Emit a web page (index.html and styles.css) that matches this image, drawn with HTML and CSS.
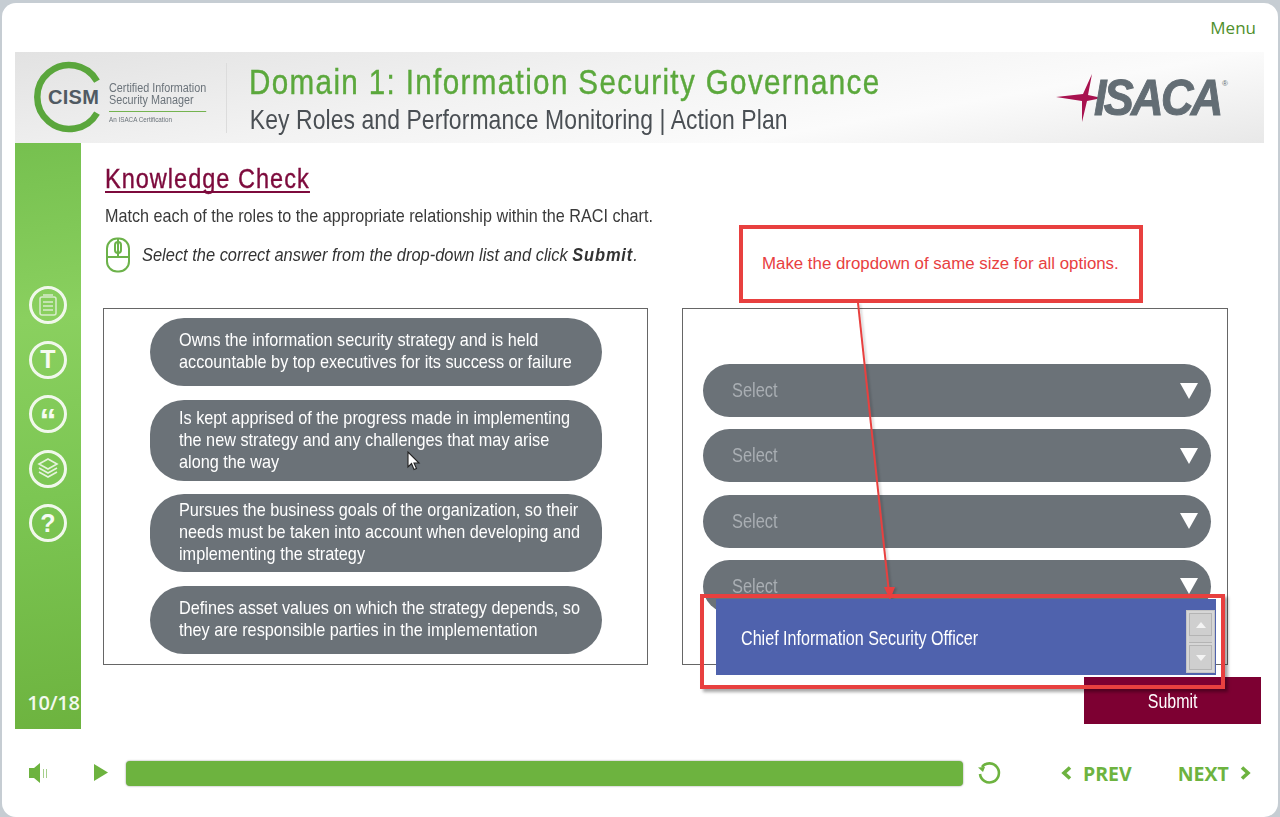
FILE: index.html
```html
<!DOCTYPE html>
<html lang="en">
<head>
    <meta charset="UTF-8">
    <title>Knowledge Check</title>
    <link rel="stylesheet" href="styles.css">
</head>
<body>
    <div class="frame">
        <div class="topbar"><span class="menu">Menu</span></div>

        <header class="banner">
            <div class="cism">
                <svg class="cism-ring" width="72" height="72" viewBox="0 0 72 72">
                    <path d="M64 20A32 32 0 1 0 64 52" fill="none" stroke="#5aa63c" stroke-width="6.5"/>
                </svg>
                <span class="cism-word">CISM</span>
                <div class="cism-text">
                    <span>Certified Information</span>
                    <span>Security Manager</span>
                    <i class="cism-rule"></i>
                    <small>An ISACA Certification</small>
                </div>
            </div>
            <div class="titles">
                <h1>Domain 1: Information Security Governance</h1>
                <h2>Key Roles and Performance Monitoring | Action Plan</h2>
            </div>
            <div class="isaca">
                <svg width="46" height="48" viewBox="0 0 46 48">
                    <path d="M0 23L27 20L36 0L32 21L46 24L31 27L26 48L26 27Z" fill="#a8124f"/>
                </svg>
                <span class="isaca-word">ISACA</span>
                <span class="isaca-reg">®</span>
            </div>
        </header>

        <div class="middle">
            <aside class="sidebar">
                <div class="side-icons">
                    <span class="side-icon">
                        <svg width="20" height="22" viewBox="0 0 20 22" fill="none" stroke="#d8eccb" stroke-width="1.5"><rect x="2" y="3" width="16" height="18" rx="2"/><path d="M5 1h10M5 8h10M5 12h10M5 16h10"/></svg>
                    </span>
                    <span class="side-icon glyph">T</span>
                    <span class="side-icon glyph quote">“</span>
                    <span class="side-icon">
                        <svg width="22" height="24" viewBox="0 0 22 24" fill="none" stroke="#e6f3dd" stroke-width="1.6"><path d="M11 2L20 7L11 12L2 7Z"/><path d="M2 11L11 16L20 11M2 15L11 20L20 15"/></svg>
                    </span>
                    <span class="side-icon glyph">?</span>
                </div>
                <div class="page-count">10/18</div>
            </aside>

            <main class="content">
                <h3 class="check-title">Knowledge Check</h3>
                <p class="intro">Match each of the roles to the appropriate relationship within the RACI chart.</p>
                <div class="hint">
                    <svg width="26" height="36" viewBox="0 0 26 36" fill="none" stroke="#6cb24a" stroke-width="2"><rect x="2" y="1.5" width="22" height="33" rx="10"/><path d="M2 20H24M13 1.500V20"/><rect x="10" y="5" width="6" height="11" rx="3"/></svg>
                    <p>Select the correct answer from the drop-down list and click <b>Submit</b>.</p>
                </div>

                <div class="panels">
                    <section class="panel roles">
                        <div class="role role-a"><span>Owns the information security strategy and is held<br>accountable by top executives for its success or failure</span></div>
                        <div class="role role-b"><span>Is kept apprised of the progress made in implementing<br>the new strategy and any challenges that may arise<br>along the way</span></div>
                        <div class="role role-c"><span>Pursues the business goals of the organization, so their<br>needs must be taken into account when developing and<br>implementing the strategy</span></div>
                        <div class="role role-d"><span>Defines asset values on which the strategy depends, so<br>they are responsible parties in the implementation</span></div>
                    </section>
                    <section class="panel selects">
                        <div class="select"><span>Select</span><i class="caret"></i></div>
                        <div class="select"><span>Select</span><i class="caret"></i></div>
                        <div class="select"><span>Select</span><i class="caret"></i></div>
                        <div class="select"><span>Select</span><i class="caret"></i></div>
                    </section>
                </div>
                <div class="submit-row"><button class="submit"><span>Submit</span></button></div>
            </main>
        </div>

        <footer class="controls">
            <svg class="sound" width="20" height="20" viewBox="0 0 20 20" fill="#6db33f"><path d="M0 5H5L11 0V20L5 15H0Z"/><path d="M14 6h1v9h-1zM17 6h1v9h-1z" fill="#a5cf8a"/></svg>
            <svg class="play" width="16" height="18" viewBox="0 0 16 18" fill="#6db33f"><path d="M1 0L15 8.500L1 17Z"/></svg>
            <div class="progress"></div>
            <svg class="replay" width="26" height="26" viewBox="0 0 26 26" fill="none" stroke="#6db33f" stroke-width="2.600"><path d="M6 7A9.500 9.500 0 1 1 4 14"/><path d="M2 7.500L7 12L9 7Z" fill="#6db33f" stroke="none"/></svg>
            <nav class="pager">
                <span class="pager-link prev">
                    <svg width="11" height="14" viewBox="0 0 11 14" fill="none" stroke="#6db33f" stroke-width="3.600"><path d="M9 1.500L3 7L9 12.500"/></svg>
                    PREV
                </span>
                <span class="pager-link next">
                    NEXT
                    <svg width="11" height="14" viewBox="0 0 11 14" fill="none" stroke="#6db33f" stroke-width="3.600"><path d="M2 1.500L8 7L2 12.500"/></svg>
                </span>
            </nav>
        </footer>
    </div>

    <!-- review annotation sitting on top of the slide -->
    <div class="note"><span>Make the dropdown of same size for all options.</span></div>
    <svg class="note-arrow" width="60" height="300" viewBox="0 0 60 300">
        <path d="M10 0L41 290" stroke="#e8403f" stroke-width="2" fill="none"/>
        <path d="M36 284L47 284L42 297Z" fill="#e8403f"/>
    </svg>
    <div class="dropdown">
        <span class="dropdown-text">Chief Information Security Officer</span>
        <div class="scroller">
            <div class="scroll-btn btn-up"><i class="up"></i></div>
            <div class="scroll-thumb"></div>
            <div class="scroll-btn btn-down"><i class="down"></i></div>
        </div>
    </div>
    <div class="note-box"></div>
    <svg class="cursor" width="14" height="20" viewBox="0 0 14 20"><path d="M1 1V16L4.500 12.500L7 18.500L9.500 17.500L7 12H12Z" fill="#fff" stroke="#222" stroke-width="1.100"/></svg>
</body>
</html>
```

FILE: styles.css
```css
* {
    box-sizing: border-box;
}
body {
    margin: 0;
    height: 817px;
    overflow: hidden;
    background: #c6cdd3;
    padding: 3px 2px 0;
    font-family: "Liberation Sans", Arial, sans-serif;
    position: relative;
}
.frame {
    background: #fff;
    height: 814px;
    border-radius: 14px;
    padding: 0 14px 0 13px;
}
.topbar {
    height: 49px;
    display: flex;
    justify-content: flex-end;
    padding: 15px 8px 0 0;
}
.menu {
    font-family: "Open Sans", sans-serif;
    font-size: 17px;
    line-height: 20px;
    color: #4f8f2c;
}

/* banner */
.banner {
    height: 91px;
    display: flex;
    align-items: center;
    background: linear-gradient(170deg, #e2e2e2 0%, #f2f2f2 40%, #fbfbfb 70%, #e8e8e8 100%);
}
.cism {
    width: 212px;
    height: 70px;
    flex: none;
    position: relative;
    border-right: 1px solid #dcdcdc;
    display: flex;
    align-items: center;
    padding-left: 19px;
}
.cism-ring {
    position: absolute;
    left: 18px;
    top: -2px;
}
.cism-word {
    position: relative;
    font-weight: bold;
    font-size: 20px;
    letter-spacing: 0.3px;
    color: #505a62;
    margin-left: 14px;
    width: 56px;
    flex: none;
}
.cism-text {
    display: flex;
    flex-direction: column;
    margin-left: 5px;
    font-size: 12px;
    line-height: 12px;
    color: #6b737a;
    white-space: nowrap;
    padding-top: 11px;
    transform: scaleX(0.9);
    transform-origin: 0 50%;
}
.cism-rule {
    height: 1px;
    background: #74b34f;
    margin: 5px 0 4px;
}
.cism-text small {
    font-size: 7px;
    line-height: 8px;
}
.titles {
    flex: 1;
    padding: 0 0 0 22px;
}
h1 {
    margin: 0;
    font-size: 35px;
    line-height: 43px;
    font-weight: normal;
    letter-spacing: 1.6px;
    color: #5ba83c;
    -webkit-text-stroke: 0.4px #5ba83c;
    white-space: nowrap;
    transform: scaleX(0.846);
    transform-origin: 0 50%;
}
h2 {
    margin: 2px 0 0;
    padding-left: 1px;
    font-size: 28px;
    line-height: 30px;
    font-weight: normal;
    letter-spacing: 0.1px;
    color: #4a4f54;
    white-space: nowrap;
    transform: scaleX(0.819);
    transform-origin: 0 50%;
}
.isaca {
    display: flex;
    align-items: center;
    width: 208px;
    flex: none;
    height: 50px;
    position: relative;
}
.isaca svg {
    flex: none;
}
.isaca-word {
    margin-left: -8px;
    font-weight: bold;
    font-style: italic;
    font-size: 50px;
    letter-spacing: -3px;
    color: #636d74;
    -webkit-text-stroke: 1px #636d74;
    transform: scaleX(0.9);
    transform-origin: 0 50%;
}
.isaca-reg {
    position: absolute;
    left: 166px;
    top: 6px;
    font-size: 8px;
    color: #636d74;
}

/* middle */
.middle {
    display: flex;
    height: 586px;
}
.sidebar {
    width: 66px;
    flex: none;
    background: linear-gradient(172deg, #76c04f 0%, #8ad05f 30%, #7cc653 60%, #6db33f 100%);
    display: flex;
    flex-direction: column;
    justify-content: space-between;
    align-items: center;
}
.side-icons {
    display: flex;
    flex-direction: column;
    gap: 16.500px;
    padding-top: 143px;
}
.side-icon {
    width: 38px;
    height: 38px;
    border: 3px solid #f1f8ec;
    border-radius: 50%;
    display: flex;
    align-items: center;
    justify-content: center;
    color: #f6fbf2;
    font-weight: bold;
    font-size: 25px;
}
.quote {
    font-size: 34px;
    padding-top: 12px;
}
.page-count {
    font-family: "Open Sans", sans-serif;
    font-weight: 600;
    font-size: 20px;
    line-height: 24px;
    color: #f3f9ee;
    padding: 0 0 14px 11px;
    letter-spacing: -0.2px;
}
.content {
    flex: 1;
    padding: 23px 0 0 24px;
}
.check-title {
    width: max-content;
    margin: 0;
    font-size: 28px;
    line-height: 25px;
    font-weight: normal;
    letter-spacing: 1.2px;
    color: #7d0a3c;
    -webkit-text-stroke: 0.4px #7d0a3c;
    border-bottom: 2px solid #7d0a3c;
    transform: scaleX(0.84);
    transform-origin: 0 50%;
}
.intro {
    margin: 11px 0 0;
    font-size: 19px;
    line-height: 24px;
    color: #3a3a3a;
    white-space: nowrap;
    transform: scaleX(0.852);
    transform-origin: 0 50%;
}
.hint {
    display: flex;
    align-items: center;
    gap: 11px;
    margin: 9px 0 0;
}
.hint p {
    margin: 0;
    font-size: 19px;
    font-style: italic;
    color: #333;
    white-space: nowrap;
    transform: scaleX(0.865);
    transform-origin: 0 50%;
}
.hint b {
    letter-spacing: 1px;
}
.panels {
    display: flex;
    gap: 34px;
    margin: 35px 0 0 -2px;
}
.panel {
    width: 545px;
    height: 357px;
    border: 1px solid #666;
}
.roles {
    padding: 9px 0 0 46px;
    display: flex;
    flex-direction: column;
}
.role {
    width: 452px;
    background: #6b7278;
    border-radius: 34px;
    color: #fff;
    font-size: 19px;
    line-height: 22px;
    padding: 0 0 2px 29px;
    display: flex;
    align-items: center;
    flex: none;
}
.role span {
    white-space: nowrap;
    transform: scaleX(0.855);
    transform-origin: 0 50%;
}
.role-a { height: 68px; }
.role-b { height: 81px; margin-top: 14px; }
.role-c { height: 78px; margin-top: 13px; }
.role-d { height: 68px; margin-top: 14px; }
.selects {
    width: 546px;
    padding: 55px 0 0 20px;
    display: flex;
    flex-direction: column;
    gap: 12.330px;
}
.select {
    width: 508px;
    height: 53px;
    flex: none;
    background: #6b7278;
    border-radius: 27px;
    display: flex;
    align-items: center;
    justify-content: space-between;
    padding: 0 13px 0 29px;
    color: #a9aeb3;
    font-size: 20px;
}
.select span {
    transform: scaleX(0.82);
    transform-origin: 0 50%;
}
.caret {
    width: 0;
    height: 0;
    border-left: 9.500px solid transparent;
    border-right: 9.500px solid transparent;
    border-top: 16px solid #fff;
}
.submit-row {
    display: flex;
    justify-content: flex-end;
    padding-right: 3px;
    margin-top: 12px;
}
.submit {
    width: 177px;
    height: 47px;
    background: #7d0032;
    border: none;
    color: #fff;
    font-family: inherit;
    font-size: 21px;
}
.submit span {
    display: inline-block;
    transform: scaleX(0.76);
}

/* footer */
.controls {
    display: flex;
    align-items: center;
    height: 88px;
    padding: 0 12px 0 14px;
}
.sound { margin-right: 44px; }
.play { margin-right: 17px; }
.progress {
    width: 837px;
    height: 25px;
    background: #6db33f;
    border-radius: 4px;
    box-shadow: 0 0 2px #888;
}
.replay { margin-left: 13px; }
.pager {
    display: flex;
    gap: 46px;
    margin-left: 59px;
}
.pager-link {
    display: flex;
    align-items: center;
    gap: 11px;
    font-family: "Open Sans", sans-serif;
    font-weight: 700;
    font-size: 19.500px;
    color: #6db33f;
}

/* annotation overlay */
.note {
    position: absolute;
    left: 739px;
    top: 225px;
    width: 404px;
    height: 78px;
    background: #fff;
    border: 4px solid #e8403f;
    display: flex;
    align-items: center;
    padding: 0 0 1px 19px;
    font-size: 16.850px;
    color: #e8403f;
}
.note-arrow {
    position: absolute;
    left: 848px;
    top: 303px;
    filter: drop-shadow(2px 1px 1px rgba(0, 0, 0, 0.18));
}
.dropdown {
    position: absolute;
    left: 716px;
    top: 599px;
    width: 500px;
    height: 76px;
    background: #4f62ad;
    color: #fff;
    font-size: 20px;
    display: flex;
    align-items: center;
    justify-content: space-between;
    padding: 0 1px 0 25px;
}
.dropdown-text {
    padding-top: 2px;
    transform: scaleX(0.806);
    transform-origin: 0 50%;
}
.scroller {
    width: 29px;
    height: 63px;
    margin-top: 9px;
    background: #d6d6d6;
    border: 1px solid #c4c4c4;
    display: flex;
    flex-direction: column;
    padding: 2px;
}
.scroll-btn {
    background: #cfcfcf;
    border: 1px solid #b4b4b4;
    display: flex;
    align-items: center;
    justify-content: center;
}
.btn-up { height: 23px; }
.btn-down { height: 25px; margin-top: 2px; }
.scroll-thumb {
    height: 7px;
    background: #cfcfcf;
    border-bottom: 1px solid #b4b4b4;
}
.up, .down {
    width: 0;
    height: 0;
    border-left: 5px solid transparent;
    border-right: 5px solid transparent;
}
.up { border-bottom: 6px solid #f4f4f4; }
.down { border-top: 6px solid #f4f4f4; }
.note-box {
    position: absolute;
    left: 700px;
    top: 594px;
    width: 525px;
    height: 95px;
    border: 4px solid #e8403f;
    box-shadow: 3px 3px 3px rgba(0, 0, 0, 0.35);
}
.cursor {
    position: absolute;
    left: 407px;
    top: 451px;
}
```
